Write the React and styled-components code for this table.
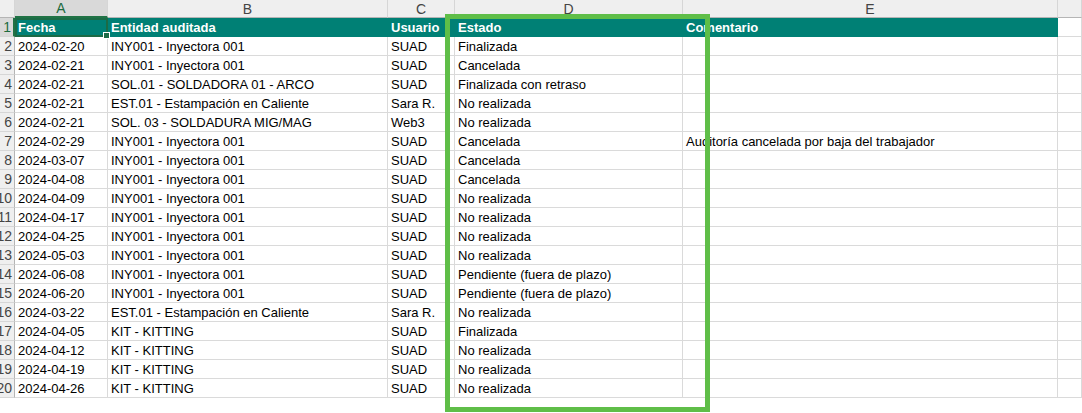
import styled, { createGlobalStyle } from "styled-components";

const GlobalStyle = createGlobalStyle`
  html, body {
    margin: 0;
    padding: 0;
    background: #fff;
    overflow: hidden;
  }
  body {
    font-family: "Liberation Sans", Arial, sans-serif;
  }
`;

const COLS = "15px 93px 280px 67px 228px 375px 1fr";

const Wrap = styled.div`
  position: relative;
  width: 1082px;
  height: 413px;
  overflow: hidden;
  background: #fff;
`;

const Grid = styled.div`
  display: grid;
  grid-template-columns: ${COLS};
  grid-auto-rows: 19px;
  grid-template-rows: 18px;
  font-size: 13px;
  color: #000;
`;

const ColHead = styled.div`
  box-sizing: border-box;
  background: ${(p) => (p.$active ? "#d9d9d9" : "#efefef")};
  color: ${(p) => (p.$active ? "#1d6b3f" : "#444")};
  border-right: 1px solid #d6d6d6;
  border-bottom: ${(p) => (p.$active ? "2px solid #217346" : "1px solid #b5b5b5")};
  display: flex;
  align-items: center;
  justify-content: center;
  font-size: 14px;
  line-height: 16px;
`;

const RowHead = styled.div`
  box-sizing: border-box;
  background: ${(p) => (p.$active ? "#d9d9d9" : "#efefef")};
  color: ${(p) => (p.$active ? "#1d6b3f" : "#444")};
  border-right: ${(p) => (p.$active ? "2px solid #217346" : "1px solid #b5b5b5")};
  border-bottom: 1px solid #d6d6d6;
  display: flex;
  align-items: center;
  justify-content: flex-end;
  padding-right: 2px;
  overflow: hidden;
  white-space: nowrap;
  font-size: 14px;
`;

const Cell = styled.div`
  position: relative;
  box-sizing: border-box;
  border-right: 1px solid #dadada;
  border-bottom: 1px solid #dadada;
  padding: 0 3px;
  display: flex;
  align-items: center;
  white-space: nowrap;
  overflow: visible;
  z-index: ${(p) => (p.$overflow ? 1 : 0)};
`;

const HeadCell = styled.div`
  position: relative;
  box-sizing: border-box;
  background: #008075;
  color: #fff;
  font-weight: bold;
  padding: 0 3px;
  display: flex;
  align-items: center;
  white-space: nowrap;
  border: ${(p) => (p.$selected ? "2px solid #1c6b46" : "none")};
  padding-left: ${(p) => (p.$selected ? "1px" : "3px")};
`;

const BlankCell = styled(Cell)`
  background: #fff;
`;

const FillHandle = styled.span`
  position: absolute;
  right: -4px;
  bottom: -4px;
  width: 5px;
  height: 5px;
  background: #1c6b46;
  border: 1px solid #fff;
  z-index: 3;
`;

const Highlight = styled.div`
  position: absolute;
  left: 445px;
  top: 14px;
  width: 265px;
  height: 398px;
  box-sizing: border-box;
  border: 5px solid #5fbe48;
  pointer-events: none;
  z-index: 5;
`;

const letters = ["A", "B", "C", "D", "E", ""];

const headers = ["Fecha", "Entidad auditada", "Usuario", "Estado", "Comentario"];

const INY = "INY001 - Inyectora 001";
const KIT = "KIT - KITTING";
const EST = "EST.01 - Estampación en Caliente";
const NR = "No realizada";
const PF = "Pendiente (fuera de plazo)";

const rows = [
  ["2024-02-20", INY, "SUAD", "Finalizada", ""],
  ["2024-02-21", INY, "SUAD", "Cancelada", ""],
  ["2024-02-21", "SOL.01 - SOLDADORA 01 - ARCO", "SUAD", "Finalizada con retraso", ""],
  ["2024-02-21", EST, "Sara R.", NR, ""],
  ["2024-02-21", "SOL. 03 - SOLDADURA MIG/MAG", "Web3", NR, ""],
  ["2024-02-29", INY, "SUAD", "Cancelada", "Auditoría cancelada por baja del trabajador"],
  ["2024-03-07", INY, "SUAD", "Cancelada", ""],
  ["2024-04-08", INY, "SUAD", "Cancelada", ""],
  ["2024-04-09", INY, "SUAD", NR, ""],
  ["2024-04-17", INY, "SUAD", NR, ""],
  ["2024-04-25", INY, "SUAD", NR, ""],
  ["2024-05-03", INY, "SUAD", NR, ""],
  ["2024-06-08", INY, "SUAD", PF, ""],
  ["2024-06-20", INY, "SUAD", PF, ""],
  ["2024-03-22", EST, "Sara R.", NR, ""],
  ["2024-04-05", KIT, "SUAD", "Finalizada", ""],
  ["2024-04-12", KIT, "SUAD", NR, ""],
  ["2024-04-19", KIT, "SUAD", NR, ""],
  ["2024-04-26", KIT, "SUAD", NR, ""],
];

export default function App() {
  return (
    <Wrap>
      <GlobalStyle />
      <Grid>
        <ColHead />
        {letters.map((l, i) => (
          <ColHead key={i} $active={l === "A"}>
            {l}
          </ColHead>
        ))}

        <RowHead $active>1</RowHead>
        {headers.map((h, i) => (
          <HeadCell key={h} $selected={i === 0}>
            {h}
            {i === 0 && <FillHandle />}
          </HeadCell>
        ))}
        <BlankCell />

        {rows.map((r, ri) => (
          <RowGroup key={ri} n={ri + 2} cells={r} />
        ))}
      </Grid>
      <Highlight />
    </Wrap>
  );
}

function RowGroup({ n, cells }) {
  return (
    <>
      <RowHead>{n}</RowHead>
      {cells.map((c, i) => (
        <Cell key={i} $overflow={!!c}>
          {c}
        </Cell>
      ))}
      <Cell />
    </>
  );
}
